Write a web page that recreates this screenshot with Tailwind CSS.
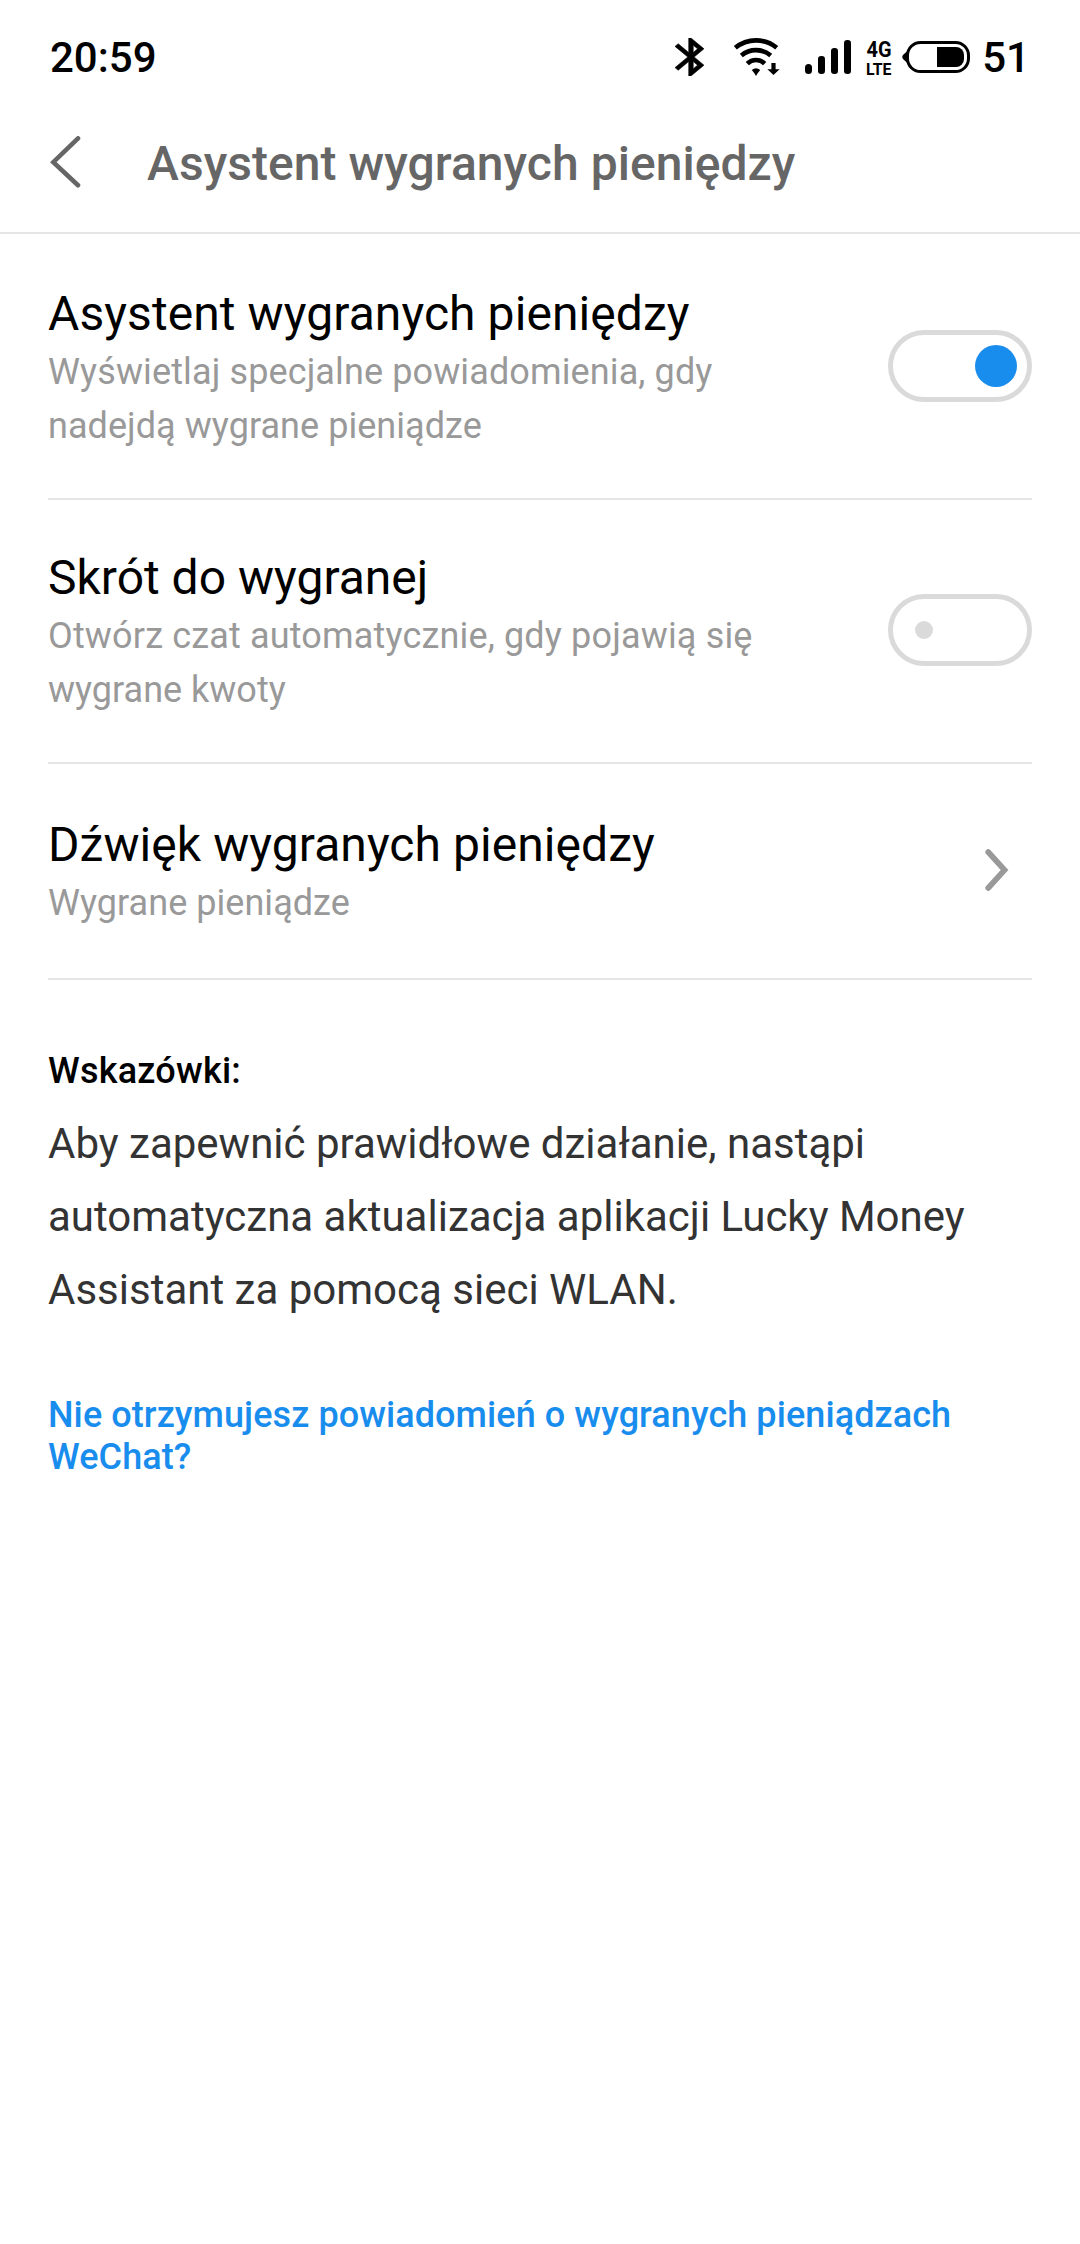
<!DOCTYPE html>
<html lang="pl">
<head>
<meta charset="utf-8">
<title>Asystent wygranych pieniędzy</title>
<script src="https://cdn.jsdelivr.net/npm/@tailwindcss/browser@4"></script>
</head>
<body class="bg-white font-['Roboto',sans-serif] text-black w-[1080px] h-[2244px] overflow-hidden">
<header class="h-[234px] border-b-2 border-[#e5e5e5]">
  <div class="h-[114px] pl-[50px] pr-[50px] flex items-center text-[42px] font-medium">
    <span>20:59</span>
    <div class="ml-auto flex items-center mr-[11px]">
      <!-- bluetooth -->
      <svg class="w-[29px] h-[38px] mr-[29px]" viewBox="5 2 12.71 20" preserveAspectRatio="none"><path d="M17.71 7.71L12 2h-1v7.59L6.41 5 5 6.41 10.59 12 5 17.59 6.41 19 11 14.41V22h1l5.71-5.71-4.3-4.29 4.3-4.29zM13 5.83l1.88 1.88L13 9.59V5.83zm1.88 10.46L13 18.17v-3.76l1.88 1.88z" stroke="#000" stroke-width="0.25"/></svg>
      <!-- wifi -->
      <svg class="w-[47px] h-[38px] mr-[25px]" viewBox="733 38 47 38"><g fill="none" stroke="#000" stroke-width="4.6"><path d="M735.3 47.8A32.4 32.4 0 0 1 776.7 47.8"/><path d="M741.3 55.4A23 23 0 0 1 770.7 55.4"/><path d="M747.3 63.6A12.4 12.4 0 0 1 764.7 63.6"/></g><path d="M751.8 70Q756 66.6 760.2 70L757.5 73.5L756 76L754.5 73.5Z"/><path d="M771.4 63h4.2v6.3h4L773.5 75L767.4 69.3h4z"/></svg>
      <!-- signal -->
      <svg class="w-[46px] h-[38px] mr-[14px]" viewBox="805 38 46 38"><rect x="805" y="64" width="7" height="10" rx="3.5"/><rect x="818" y="56" width="7" height="18" rx="3.2"/><rect x="831" y="48" width="7" height="26" rx="3.2"/><rect x="844" y="40" width="7" height="34" rx="3.2"/></svg>
      <!-- network type -->
      <svg class="w-[30px] h-[54px] mr-[7px] overflow-visible" viewBox="865 30 30 54"><g class="font-['Roboto',sans-serif] font-bold"><text x="866.5" y="57" font-size="22" textLength="25" lengthAdjust="spacingAndGlyphs">4G</text><text x="866" y="74.7" font-size="16" textLength="25.5" lengthAdjust="spacingAndGlyphs">LTE</text></g></svg>
      <!-- battery -->
      <svg class="w-[69px] h-[38px]" viewBox="902 38 69 38"><rect x="907.5" y="42.5" width="61" height="29" rx="13" fill="none" stroke="#000" stroke-width="3"/><path d="M907.5 50.5C906 53 902.3 54.5 902.3 57S906 61 907.5 63.5Z"/><path d="M937 47h19a8 8 0 0 1 8 8v4a8 8 0 0 1-8 8h-19z"/></svg>
    </div>
    <span>51</span>
  </div>
  <div class="h-[98px] pl-[50px] flex items-center">
    <svg class="w-8 h-[52px] -mt-[2px]" viewBox="50 136 32 52" fill="none" stroke="#666" stroke-width="4.6" stroke-linecap="round"><path d="M78 138.4L53.3 162.2L78 185.2"/></svg>
    <h1 class="ml-[65px] mt-[2px] text-[48px] leading-[56px] font-medium text-[#666] tracking-[0.05px]">Asystent wygranych pieniędzy</h1>
  </div>
</header>
<main class="px-12">
  <section class="h-[266px] border-b-2 border-[#e5e5e5] flex items-start justify-between">
    <div class="pt-[52px]"><h2 class="text-[48px] leading-[56px] tracking-[0.08px]">Asystent wygranych pieniędzy</h2><p class="mt-[3px] text-[36px] leading-[54px] text-[#999]"><span class="tracking-[0.12px]">Wyświetlaj specjalne powiadomienia, gdy</span><br><span class="tracking-[0.05px]">nadejdą wygrane pieniądze</span></p></div>
    <div class="mt-[96px] w-[144px] h-[72px] rounded-full border-5 border-[#dadada] flex items-center justify-end pr-[10px]"><span class="size-[42px] rounded-full bg-[#198ded]"></span></div>
  </section>
  <section class="h-[264px] border-b-2 border-[#e5e5e5] flex items-start justify-between">
    <div class="pt-[50px]"><h2 class="text-[48px] leading-[56px]">Skrót do wygranej</h2><p class="mt-[3px] text-[36px] leading-[54px] text-[#999]"><span class="tracking-[0.16px]">Otwórz czat automatycznie, gdy pojawią się</span><br>wygrane kwoty</p></div>
    <div class="mt-[94px] w-[144px] h-[72px] rounded-full border-5 border-[#dadada] flex items-center pl-[22px]"><span class="size-[18px] rounded-full bg-[#dadada]"></span></div>
  </section>
  <section class="h-[216px] border-b-2 border-[#e5e5e5] flex items-start justify-between">
    <div class="pt-[53px]"><h2 class="text-[48px] leading-[56px] tracking-[0.06px]">Dźwięk wygranych pieniędzy</h2><p class="mt-[3px] text-[36px] leading-[54px] text-[#999] tracking-[0.04px]">Wygrane pieniądze</p></div>
    <svg class="mt-[84px] mr-[23px] w-[25px] h-11" viewBox="984 848 25 44" fill="none" stroke="#999" stroke-width="5.6" stroke-linecap="round"><path d="M988.2 852L1004.6 870L988.2 888"/></svg>
  </section>
  <h3 class="mt-[70px] text-[36px] leading-[42px] font-medium tracking-[0.22px]">Wskazówki:</h3>
  <p class="mt-[15px] text-[42px] leading-[73px] text-[#333]">Aby zapewnić prawidłowe działanie, nastąpi<br>automatyczna aktualizacja aplikacji Lucky Money<br>Assistant za pomocą sieci WLAN.</p>
  <a class="block mt-[68px] text-[36px] leading-[42px] font-medium text-[#198ded] tracking-[0.08px]">Nie otrzymujesz powiadomień o wygranych pieniądzach<br>WeChat?</a>
</main>
</body>
</html>
